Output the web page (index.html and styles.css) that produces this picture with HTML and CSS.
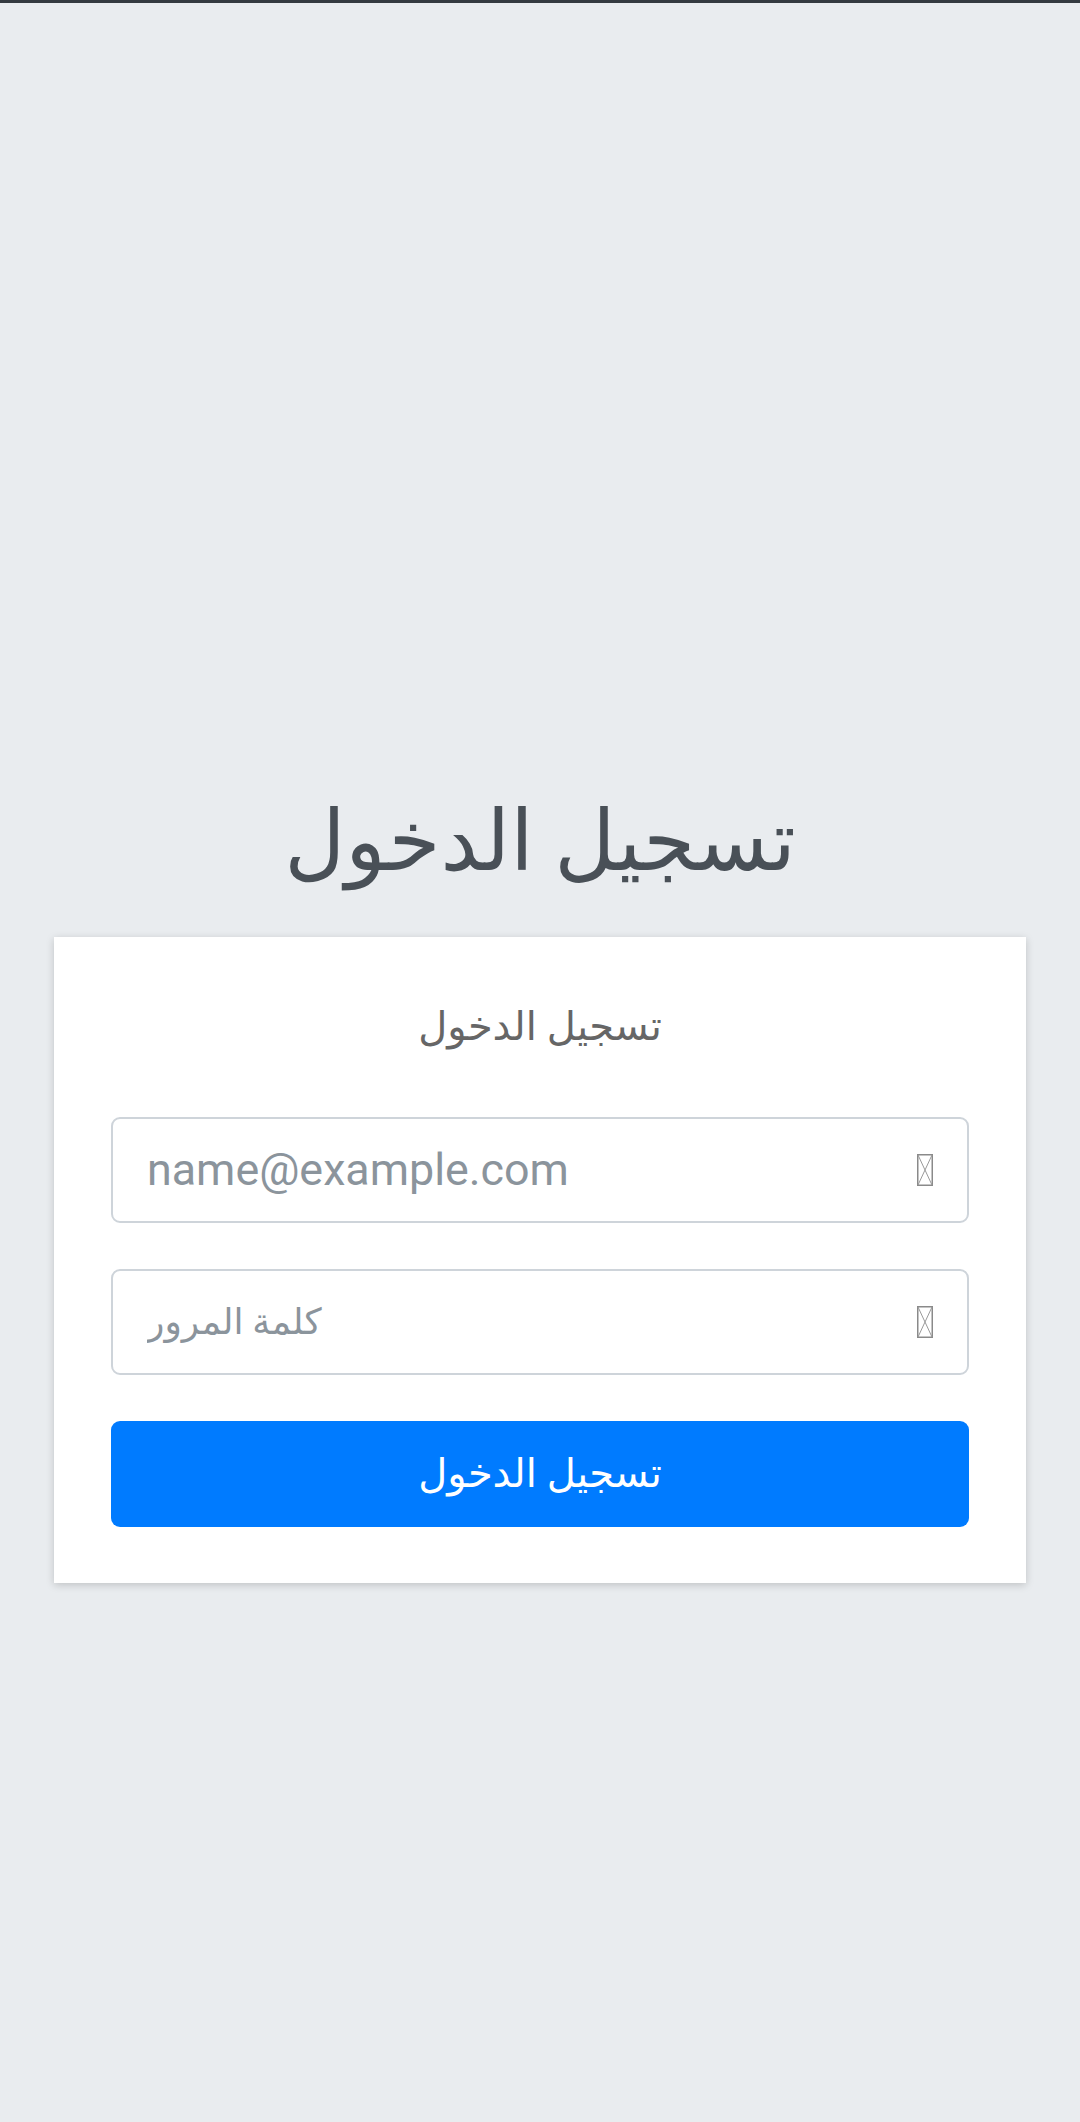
FILE: index.html
```html
<!DOCTYPE html>
<html lang="ar">
<head>
<meta charset="utf-8">
<title>تسجيل الدخول</title>
<link rel="stylesheet" href="styles.css">
</head>
<body>
<div class="topbar"></div>
<main class="page">
  <h1 class="page-title" dir="rtl">تسجيل الدخول</h1>
  <section class="card">
    <h2 class="card-title" dir="rtl">تسجيل الدخول</h2>
    <div class="field">
      <input class="field-input" type="email" placeholder="name@example.com">
      <svg class="tofu" viewBox="0 0 16 32" width="16" height="32"><rect x="0.75" y="0.75" width="14.5" height="30.5" fill="none" stroke="#8a8a8a" stroke-width="1.5"/><path d="M1 1 L15 31 M15 1 L1 31" stroke="#9a9a9a" stroke-width="1" fill="none"/></svg>
    </div>
    <div class="field">
      <input class="field-input field-input-ar" type="password" placeholder="كلمة المرور">
      <svg class="tofu" viewBox="0 0 16 32" width="16" height="32"><rect x="0.75" y="0.75" width="14.5" height="30.5" fill="none" stroke="#8a8a8a" stroke-width="1.5"/><path d="M1 1 L15 31 M15 1 L1 31" stroke="#9a9a9a" stroke-width="1" fill="none"/></svg>
    </div>
    <button class="btn" type="button" dir="rtl">تسجيل الدخول</button>
  </section>
</main>
</body>
</html>
```
FILE: styles.css
```css
html, body {
  margin: 0;
  padding: 0;
}
body {
  background: #e9ecef;
  font-family: Roboto, "DejaVu Sans", "Noto Sans", sans-serif;
  min-height: 2122px;
}
.topbar {
  height: 3px;
  background: #343a40;
}
.page {
  padding: 789px 54px 0;
  display: flex;
  flex-direction: column;
}
.page-title {
  margin: 0 0 44px;
  text-align: center;
  font-weight: 400;
  font-size: 84px;
  line-height: 1.2;
  color: #495057;
}
.card {
  background: #fff;
  box-shadow: 0 2px 8px rgba(0, 0, 0, 0.18);
  padding: 64px 57px 56px;
  display: flex;
  flex-direction: column;
}
.card-title {
  margin: 0 0 64px;
  text-align: center;
  font-weight: 400;
  font-size: 40px;
  line-height: 1.3;
  color: #666;
}
.field {
  display: flex;
  align-items: center;
  height: 106px;
  box-sizing: border-box;
  border: 2.8px solid #ced4da;
  border-radius: 9px;
  padding: 0 34px 0 34px;
  margin-bottom: 46px;
  background: #fff;
}
.field-input {
  flex: 1;
  min-width: 0;
  border: 0;
  outline: 0;
  padding: 0;
  background: transparent;
  font-family: Roboto, "DejaVu Sans", sans-serif;
  font-size: 44.8px;
  color: #495057;
}
.field-input-ar {
  font-size: 36px;
}
.field-input::placeholder {
  color: #8b949c;
}
.tofu {
  flex: none;
  display: block;
}
.btn {
  height: 106px;
  border: 0;
  border-radius: 9px;
  background: #007bff;
  color: #fff;
  font-family: Roboto, "DejaVu Sans", sans-serif;
  font-size: 40px;
  padding: 0;
}
```
